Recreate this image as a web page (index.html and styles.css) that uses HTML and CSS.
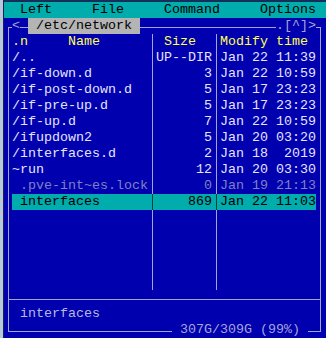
FILE: index.html
```html
<!DOCTYPE html>
<html lang="en">
<head>
    <meta charset="UTF-8">
    <meta name="viewport" content="width=device-width, initial-scale=1.0">
    <title>mc - /etc/network</title>
    <link rel="stylesheet" href="styles.css">
</head>
<body>
    <div class="window">
        <div class="screen">
            <div class="menubar">  Left     File     Command     Options</div>

            <div class="panel">
                <div class="panel-title"><span class="arrow">&lt;</span><span class="gap"></span><span class="path"> /etc/network </span></div>
                <div class="panel-hotlist">.[^]&gt;</div>

                <div class="list">
                    <div class="row header"><span class="name">.n     Name</span><span class="size"> Size</span><span class="time">Modify time</span></div>
                    <div class="row"><span class="name">/..</span><span class="size">UP--DIR</span><span class="time">Jan 22 11:39</span></div>
                    <div class="row"><span class="name">/if-down.d</span><span class="size">3</span><span class="time">Jan 22 10:59</span></div>
                    <div class="row"><span class="name">/if-post-down.d</span><span class="size">5</span><span class="time">Jan 17 23:23</span></div>
                    <div class="row"><span class="name">/if-pre-up.d</span><span class="size">5</span><span class="time">Jan 17 23:23</span></div>
                    <div class="row"><span class="name">/if-up.d</span><span class="size">7</span><span class="time">Jan 22 10:59</span></div>
                    <div class="row"><span class="name">/ifupdown2</span><span class="size">5</span><span class="time">Jan 20 03:20</span></div>
                    <div class="row"><span class="name">/interfaces.d</span><span class="size">2</span><span class="time">Jan 18  2019</span></div>
                    <div class="row"><span class="name">~run</span><span class="size">12</span><span class="time">Jan 20 03:30</span></div>
                    <div class="row hidden"><span class="name"> .pve-int~es.lock</span><span class="size">0</span><span class="time">Jan 19 21:13</span></div>
                    <div class="row selected"><span class="name"> interfaces</span><span class="size">869</span><span class="time">Jan 22 11:03</span></div>
                    <div class="row"><span class="name"> </span><span class="size"> </span><span class="time"> </span></div>
                    <div class="row"><span class="name"> </span><span class="size"> </span><span class="time"> </span></div>
                    <div class="row"><span class="name"> </span><span class="size"> </span><span class="time"> </span></div>
                    <div class="row"><span class="name"> </span><span class="size"> </span><span class="time"> </span></div>
                    <div class="row"><span class="name"> </span><span class="size"> </span><span class="time"> </span></div>
                </div>

                <div class="mini-status">interfaces</div>
                <div class="disk-info"> 307G/309G (99%) </div>
            </div>
        </div>
    </div>
</body>
</html>
```

FILE: styles.css
```css
body {
    margin: 0;
    padding: 0;
    background: #0000ae;
    font-family: 'Liberation Mono', 'DejaVu Sans Mono', monospace;
    font-size: 13.333px;
    line-height: 16px;
    color: #e4e4ff;
    overflow: hidden;
}

.window {
    height: 338px;
    border-left: 3px solid #b6c8dc;
    box-sizing: border-box;
}

.screen {
    height: 100%;
    border-left: 1px solid #1c2050;
    border-top: 2px solid #123058;
    box-sizing: border-box;
}

.menubar {
    height: 16px;
    background: #00acac;
    color: #000;
    white-space: pre;
}

.panel {
    position: relative;
    width: 311px;
    margin: 9px 0 0 4px;
    border: 1px solid #a4a4dc;
}

.panel-title {
    position: absolute;
    top: -10px;
    left: 3px;
    display: flex;
    height: 16px;
}

.arrow {
    width: 8px;
    background: #0000ae;
    color: #a4a4dc;
}

.gap {
    width: 8px;
}

.path {
    background: #b4b4b4;
    color: #000;
    white-space: pre;
}

.panel-hotlist {
    position: absolute;
    top: -10px;
    right: 4px;
    background: #0000ae;
    color: #a4a4dc;
}

.list {
    margin: 6px 0 0 3px;
}

.row {
    display: flex;
    height: 16px;
    white-space: pre;
}

.row .name {
    width: 140px;
    border-right: 1px solid #a4a4dc;
    overflow: hidden;
}

.row .size {
    width: 59px;
    padding-right: 4px;
    text-align: right;
    border-right: 1px solid #a4a4dc;
}

.row .time {
    width: 96px;
    padding-left: 3px;
}

.header {
    color: #ffff55;
}

.header .size {
    text-align: left;
    width: 60px;
    padding: 0 0 0 3px;
}

.hidden {
    color: #8080c4;
}

.selected {
    width: 304px;
    background: #00acac;
    color: #000;
}

.selected .name,
.selected .size {
    border-right-color: #063c3c;
}

.mini-status {
    margin-top: 9px;
    padding: 6px 0 9px 11px;
    border-top: 1px solid #a4a4dc;
    color: #b8b8e0;
}

.disk-info {
    position: absolute;
    right: 12px;
    bottom: -7px;
    background: #0000ae;
    color: #a4a4dc;
    white-space: pre;
}
```
